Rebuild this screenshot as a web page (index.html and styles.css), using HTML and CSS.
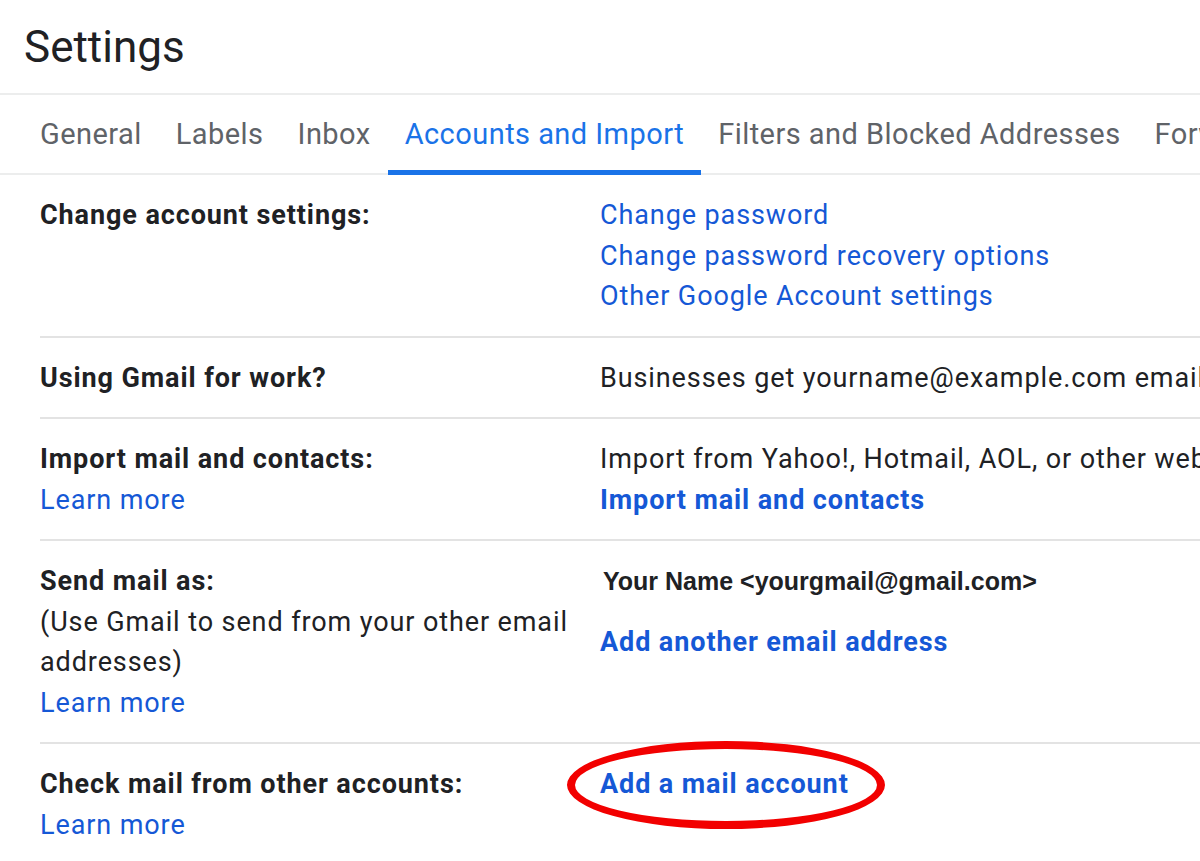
FILE: index.html
```html
<html lang="en">
<head>
	<meta http-equiv="Content-Type" content="text/html; charset=utf-8">
	<meta name="viewport" content="width=device-width, initial-scale=1.0">
	<title>Settings</title>
	<link rel="stylesheet" href="styles.css">
</head>
<body>

	<div class="header">
		<h1 class="title">Settings</h1>
	</div>

	<div class="tabs">
		<a class="tab">General</a>
		<a class="tab">Labels</a>
		<a class="tab">Inbox</a>
		<a class="tab active">Accounts and Import</a>
		<a class="tab">Filters and Blocked Addresses</a>
		<a class="tab">Forwarding and POP/IMAP</a>
	</div>

	<div class="content">
		<div class="row">
			<div class="label"><b>Change account settings:</b></div>
			<div class="value">
				<a class="link">Change password</a>
				<a class="link">Change password recovery options</a>
				<a class="link">Other Google Account settings</a>
			</div>
		</div>

		<div class="row">
			<div class="label"><b>Using Gmail for work?</b></div>
			<div class="value">
				<span class="line">Businesses get yourname@example.com email, more storage, and admin tools with Google Workspace.</span>
			</div>
		</div>

		<div class="row">
			<div class="label">
				<b>Import mail and contacts:</b>
				<a class="link">Learn more</a>
			</div>
			<div class="value">
				<span class="line">Import from Yahoo!, Hotmail, AOL, or other webmail or POP3 accounts.</span>
				<a class="link strong">Import mail and contacts</a>
			</div>
		</div>

		<div class="row">
			<div class="label">
				<b>Send mail as:</b>
				<span class="note">(Use Gmail to send from your other email addresses)</span>
				<a class="link">Learn more</a>
			</div>
			<div class="value">
				<span class="address">Your Name &lt;yourgmail@gmail.com&gt;</span>
				<a class="link strong">Add another email address</a>
			</div>
		</div>

		<div class="row last">
			<div class="label">
				<b>Check mail from other accounts:</b>
				<a class="link">Learn more</a>
			</div>
			<div class="value">
				<a class="link strong circled">Add a mail account<span class="ring"></span></a>
			</div>
		</div>
	</div>

</body>
</html>
```

FILE: styles.css
```css
body{
	margin: 0;
	padding: 0;
	overflow: hidden;
	font-family: Roboto, "Liberation Sans", sans-serif;
	color: #202124;
	background: #fff;
}

a{
	cursor: pointer;
}

.header{
	height: 93px;
	border-bottom: 2px solid #eceded;
	padding-left: 24px;
	display: flex;
	align-items: center;
}

.title{
	margin: 0;
	font-size: 44px;
	font-weight: 400;
	color: #202124;
}

.tabs{
	display: flex;
	height: 78px;
	padding-left: 23px;
	border-bottom: 2px solid #eceded;
	white-space: nowrap;
}

.tab{
	font-size: 29px;
	letter-spacing: 0.45px;
	color: #5f6368;
	padding: 18px 17px 0;
	height: 80px;
	box-sizing: border-box;
	line-height: 42px;
	border-bottom: 5px solid transparent;
	flex-shrink: 0;
}

.tab.active{
	color: #1a73e8;
	border-bottom-color: #1a73e8;
}

.content{
	margin-left: 40px;
	width: 1300px;
}

.row{
	display: flex;
	padding: 20px 0 19px;
	border-bottom: 2px solid #e3e3e3;
	font-size: 27px;
	letter-spacing: 0.9px;
	line-height: 40.5px;
}

.row.last{
	border-bottom: none;
}

.label{
	width: 560px;
	flex-shrink: 0;
	display: flex;
	flex-direction: column;
}

.label b{
	font-weight: 700;
}

.note{
	width: 540px;
}

.value{
	display: flex;
	flex-direction: column;
	white-space: nowrap;
}

.link{
	color: #1558d6;
	display: block;
}

.link.strong{
	font-weight: 700;
}

.address{
	font-family: "Liberation Sans", Arial, sans-serif;
	font-weight: 700;
	font-size: 25px;
	letter-spacing: 0;
	padding-left: 3px;
	margin-bottom: 20px;
}

.circled{
	position: relative;
	align-self: flex-start;
}

.ring{
	position: absolute;
	left: -33px;
	top: -23px;
	width: 318px;
	height: 88px;
	box-sizing: border-box;
	border: 8px solid #f20000;
	border-radius: 50%;
}
```
